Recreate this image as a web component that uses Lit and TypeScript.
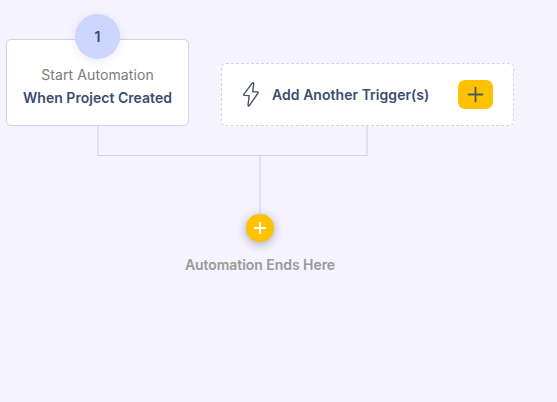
import { LitElement, html, css } from "lit";
import { customElement } from "lit/decorators.js";

@customElement("app-root")
export class AppRoot extends LitElement {
  static styles = css`
    :host {
      display: block;
      box-sizing: border-box;
      width: 557px;
      height: 402px;
      overflow: hidden;
      background: #f5f3fe;
      font-family: Inter, "Liberation Sans", sans-serif;
      font-size: 14px;
      line-height: 20px;
      color: #3b4d6e;
    }
    .triggers {
      display: flex;
      align-items: flex-end;
      gap: 32px;
      height: 126px;
      padding-left: 6px;
      box-sizing: border-box;
    }
    .card {
      box-sizing: border-box;
      background: #fff;
      border: 1px solid #d5d1eb;
      border-radius: 5px;
    }
    .start {
      position: relative;
      width: 183px;
      height: 87px;
      padding-top: 24px;
      text-align: center;
    }
    .badge {
      position: absolute;
      top: -26px;
      left: 68px;
      width: 45px;
      height: 45px;
      border-radius: 50%;
      background: #ccd6ff;
      box-shadow: 0 2px 10px rgba(60, 60, 100, 0.1);
      font-weight: 600;
      line-height: 46px;
    }
    .label {
      color: #7b7b7b;
      line-height: 21px;
      letter-spacing: 0.1px;
    }
    .name {
      font-weight: 600;
      line-height: 26px;
      letter-spacing: 0.03px;
      white-space: nowrap;
    }
    .add {
      display: flex;
      align-items: center;
      width: 293px;
      height: 63px;
      padding: 0 20px;
      border-style: dashed;
    }
    .bolt {
      margin-right: 12px;
      flex: none;
    }
    .add-text {
      flex: 1;
      font-weight: 600;
      letter-spacing: 0.04px;
      white-space: nowrap;
    }
    .add-button {
      display: flex;
      align-items: center;
      justify-content: center;
      width: 35px;
      height: 29px;
      border-radius: 7px;
      background: #ffc200;
    }
    svg {
      display: block;
    }
    .flow {
      display: flex;
      flex-direction: column;
      align-items: center;
      width: 520px;
    }
    .wires {
      width: 520px;
      height: 88px;
    }
    .step {
      display: flex;
      align-items: center;
      justify-content: center;
      width: 28px;
      height: 28px;
      border-radius: 50%;
      background: #ffc200;
      box-shadow: 0 2px 10px rgba(40, 35, 70, 0.38);
    }
    .end {
      margin-top: 13px;
      color: #999;
      font-weight: 600;
      letter-spacing: -0.05px;
    }
  `;

  render() {
    return html`
      <div class="triggers">
        <div class="card start">
          <div class="badge">1</div>
          <div class="label">Start Automation</div>
          <div class="name">When Project Created</div>
        </div>
        <div class="card add">
          <svg class="bolt" width="18" height="27" viewBox="0 0 18 27" fill="none"
            stroke="#44546f" stroke-width="1.4" stroke-linejoin="round">
            <path d="M10.2 2.2 1.8 13.3Q1.3 14.3 2.4 14.4L7.2 14.6 6 24.4Q6.2 25.4 7.1 24.8L16.1 12Q16.6 11 15.5 10.9L10.8 10.7 11.7 2.4Q11.3 1.2 10.2 2.2Z" />
          </svg>
          <div class="add-text">Add Another Trigger(s)</div>
          <div class="add-button">
            <svg width="17" height="17" viewBox="0 0 17 17" stroke="#4b5a60" stroke-width="1.8">
              <path d="M8.5 .8v15.4M.8 8.5h15.4" />
            </svg>
          </div>
        </div>
      </div>
      <div class="flow">
        <svg class="wires" viewBox="0 0 520 88">
          <path d="M98 0V30M367 0V30M260 30V88" stroke="#e4e1f3" stroke-width="2" />
          <path d="M98 29.5H367" stroke="#d5d1eb" stroke-width="1" />
        </svg>
        <div class="step">
          <svg width="12" height="12" viewBox="0 0 12 12" stroke="#fff" stroke-width="2">
            <path d="M6 0v12M0 6h12" />
          </svg>
        </div>
        <div class="end">Automation Ends Here</div>
      </div>
    `;
  }
}
